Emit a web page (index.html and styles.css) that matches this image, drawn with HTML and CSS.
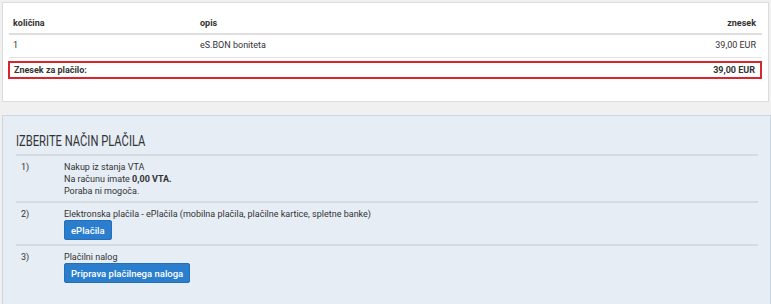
FILE: index.html
```html
<!DOCTYPE html>
<html lang="sl">
<head>
  <meta charset="UTF-8" />
  <title>Plačilo</title>
  <link rel="stylesheet" href="styles.css">
</head>
<body>

  <div class="summary-box">
    <table class="items">
      <thead>
        <tr>
          <th class="col-qty">količina</th>
          <th>opis</th>
          <th class="col-amount">znesek</th>
        </tr>
      </thead>
      <tbody>
        <tr>
          <td class="col-qty">1</td>
          <td>eS.BON boniteta</td>
          <td class="col-amount">39,00 EUR</td>
        </tr>
      </tbody>
    </table>
    <div class="total">
      <span>Znesek za plačilo:</span>
      <span>39,00 EUR</span>
    </div>
  </div>

  <div class="payment-box">
    <h2><span>Izberite način plačila</span></h2>

    <div class="pay-row">
      <div class="pay-num">1)</div>
      <div class="pay-body">
        <p>Nakup iz stanja VTA</p>
        <p>Na računu imate <b>0,00 VTA.</b></p>
        <p>Poraba ni mogoča.</p>
      </div>
    </div>

    <div class="pay-row">
      <div class="pay-num">2)</div>
      <div class="pay-body">
        <p>Elektronska plačila - ePlačila (mobilna plačila, plačilne kartice, spletne banke)</p>
        <button class="btn">ePlačila</button>
      </div>
    </div>

    <div class="pay-row">
      <div class="pay-num">3)</div>
      <div class="pay-body">
        <p>Plačilni nalog</p>
        <button class="btn">Priprava plačilnega naloga</button>
      </div>
    </div>
  </div>

</body>
</html>
```

FILE: styles.css
```css
* {
  margin: 0;
  padding: 0;
  box-sizing: border-box;
}

body {
  font-family: Roboto, 'Liberation Sans', Arial, sans-serif;
  font-size: 9px;
  color: #333;
  background: #f0f0f0;
  padding: 2px;
  width: 771px;
}

.summary-box {
  background: #fff;
  border: 1px solid #dcdcdc;
  width: 767px;
  padding: 9px 6px 22px 6px;
}

.items {
  width: 100%;
  border-collapse: collapse;
  line-height: 11px;
}

.items th,
.items td {
  text-align: left;
}

.items th {
  padding: 6px 4px 4px;
  font-weight: bold;
  border-bottom: 2px solid #dedede;
}

.items td {
  padding: 5px 4px 6px;
  border-bottom: 1px solid #e3e3e3;
}

.items .col-qty {
  width: 187px;
}

.items .col-amount {
  text-align: right;
  padding-right: 6px;
}

.total {
  display: flex;
  justify-content: space-between;
  align-items: center;
  margin: 3px 0 0 -1px;
  height: 18px;
  border: 2px solid #d9252b;
  padding: 0 5px 0 4px;
  font-weight: bold;
}

.payment-box {
  margin-top: 13px;
  background: #e6edf5;
  border: 1px solid #cbd6e1;
  width: 769px;
  height: 200px;
  padding: 0 12px 0 13px;
}

.payment-box h2 {
  font-weight: 400;
  font-size: 14px;
  text-transform: uppercase;
  color: #333;
  height: 40px;
  padding-top: 17px;
  border-bottom: 2px solid #d6dbe0;
  white-space: nowrap;
}

.payment-box h2 span {
  display: inline-block;
  transform: scaleX(0.8);
  transform-origin: left center;
}

.pay-row {
  display: flex;
  padding: 5px 0 4px 0;
  border-bottom: 2px solid #d6dbe0;
  line-height: 12px;
}

.pay-row:last-child {
  border-bottom: none;
}

.pay-num {
  width: 48px;
  padding-left: 5px;
}

.btn {
  display: block;
  font-family: inherit;
  font-size: 9.5px;
  font-weight: 500;
  color: #fff;
  background: #2a7ecd;
  border: 1px solid #246fb6;
  border-radius: 2px;
  height: 20px;
  padding: 0 6px;
}
```
